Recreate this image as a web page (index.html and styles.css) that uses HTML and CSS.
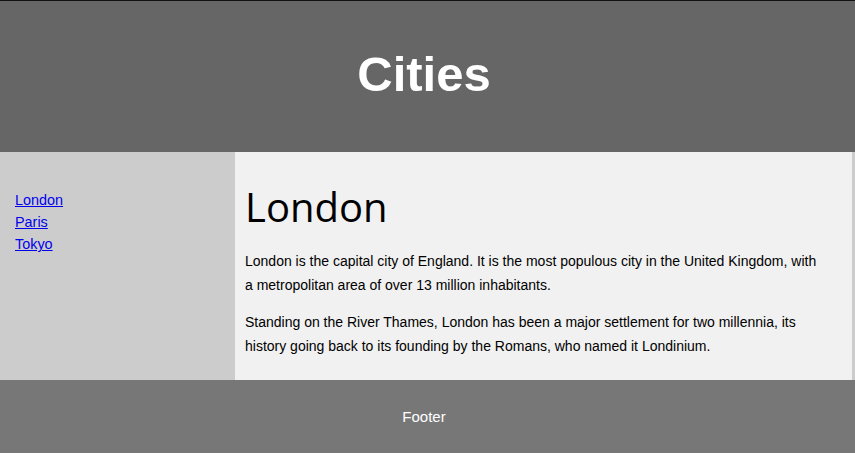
FILE: index.html
```html
<!DOCTYPE html>
<html lang="en">
<head>
<meta charset="utf-8">
<title>Cities</title>
<link rel="stylesheet" href="styles.css">
</head>
<body>
<header class="site-header">
  <h2 class="site-title">Cities</h2>
</header>
<section class="main">
  <nav class="side-nav">
    <ul class="nav-list">
      <li><a href="#">London</a></li>
      <li><a href="#">Paris</a></li>
      <li><a href="#">Tokyo</a></li>
    </ul>
  </nav>
  <article class="content">
    <h1 class="content-title">London</h1>
    <p class="content-text">London is the capital city of England. It is the most populous city in the United Kingdom, with a metropolitan area of over 13 million inhabitants.</p>
    <p class="content-text">Standing on the River Thames, London has been a major settlement for two millennia, its history going back to its founding by the Romans, who named it Londinium.</p>
  </article>
</section>
<footer class="site-footer">
  <p class="footer-text">Footer</p>
</footer>
</body>
</html>
```
FILE: styles.css
```css
* { box-sizing: border-box; }
html, body { margin: 0; padding: 0; background: #fff; }
body {
  font-family: "Liberation Sans", Arial, sans-serif;
  border-top: 1px solid #111;
}
.site-header {
  background: #666;
  height: 151px;
  display: flex;
  align-items: center;
  justify-content: center;
  padding: 0 7px 5px 0;
}
.site-title {
  margin: 0;
  color: #fff;
  font-size: 49px;
  font-weight: bold;
}
.main {
  display: flex;
  background: #ccc;
  height: 228px;
  width: 855px;
}
.side-nav {
  width: 235px;
  background: #ccc;
  padding: 37px 15px 0;
}
.nav-list {
  list-style: none;
  margin: 0;
  padding: 0;
  font-size: 14.4px;
  line-height: 22px;
}
.nav-list a { color: #0000ee; }
.content {
  width: 617px;
  background: #f1f1f1;
  padding: 0 32px 0 10px;
}
.content-title {
  font-family: "Open Sans", "Noto Sans", sans-serif;
  font-weight: normal;
  font-size: 40px;
  margin: 28px 0 15px;
  line-height: 54px;
}
.content-text {
  font-size: 14px;
  line-height: 24px;
  color: #000;
  margin: 0 0 13px;
}
.site-footer {
  background: #777;
  height: 73px;
  display: flex;
  align-items: center;
  justify-content: center;
  padding-right: 7px;
}
.footer-text {
  margin: 0;
  color: #fff;
  font-size: 15px;
}
```
